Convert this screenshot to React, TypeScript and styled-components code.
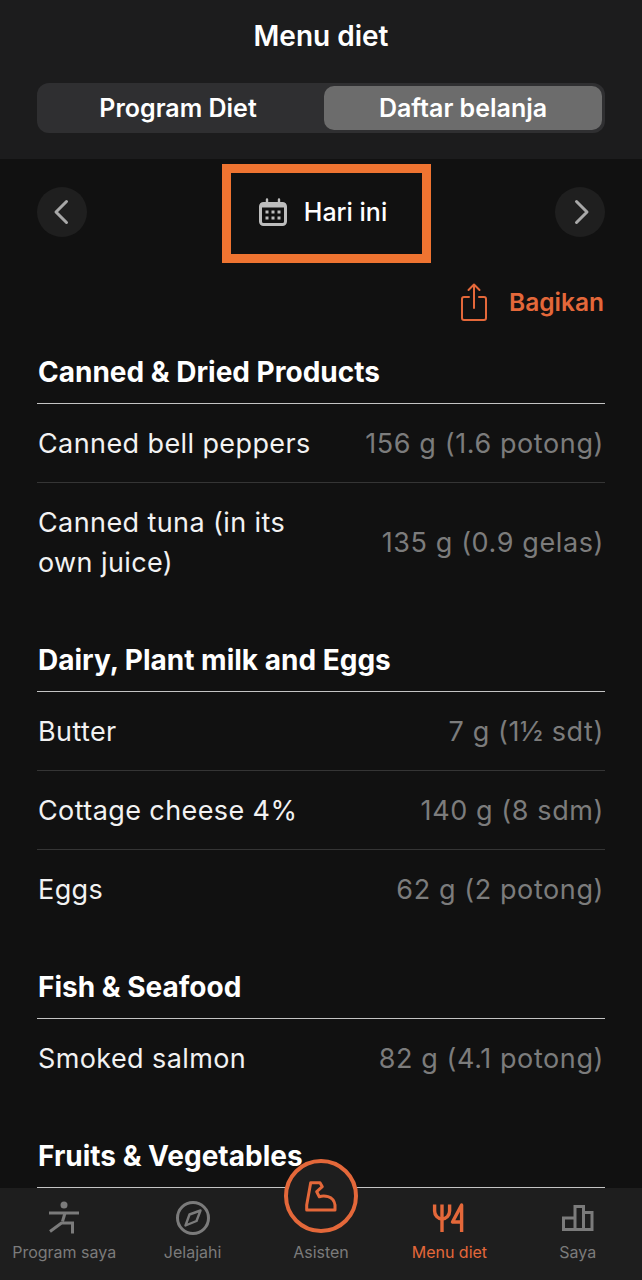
import styled, { createGlobalStyle } from "styled-components";

const GlobalStyle = createGlobalStyle`
  html, body {
    margin: 0;
    padding: 0;
    background: #111111;
  }
  * {
    box-sizing: border-box;
  }
`;

const Screen = styled.div`
  width: 642px;
  height: 1280px;
  display: flex;
  flex-direction: column;
  overflow: hidden;
  background: #111111;
  font-family: "Inter", "Liberation Sans", sans-serif;
  color: #f4f4f4;
`;

const Header = styled.header`
  height: 159px;
  flex: none;
  padding: 18px 37px 0;
  background: #1c1c1d;
`;

const Title = styled.h1`
  margin: 0 0 29px;
  height: 36px;
  font-size: 28px;
  line-height: 36px;
  font-weight: 600;
  text-align: center;
  color: #ffffff;
`;

const Segments = styled.div`
  display: grid;
  grid-template-columns: 276px 278px;
  gap: 8px;
  height: 50px;
  padding: 3px;
  border-radius: 12px;
  background: #2f2f31;
`;

const Segment = styled.div<{ $active?: boolean }>`
  display: flex;
  align-items: center;
  justify-content: center;
  border-radius: 10px;
  font-size: 25px;
  font-weight: 600;
  background: ${(p) => (p.$active ? "#6c6c6c" : "transparent")};
  color: #ffffff;
`;

const Content = styled.main`
  flex: 1;
  min-height: 0;
  overflow: hidden;
  padding: 0 37px;
`;

const DateRow = styled.div`
  position: relative;
  display: flex;
  align-items: center;
  justify-content: space-between;
  height: 50px;
  margin-top: 28px;
`;

const RoundButton = styled.button<{ $side: "left" | "right" }>`
  width: 50px;
  height: 50px;
  padding: ${(p) => (p.$side === "left" ? "0 3px 0 0" : "0 0 0 3px")};
  border: 0;
  border-radius: 50%;
  display: flex;
  align-items: center;
  justify-content: center;
  background: #1f1f1f;
`;

const Today = styled.div`
  display: flex;
  align-items: center;
  gap: 17px;
  margin-left: 4px;
  font-size: 25px;
  font-weight: 500;
  color: #ffffff;
`;

/* orange annotation drawn over the screenshot */
const Highlight = styled.div`
  position: absolute;
  left: 185px;
  top: -23px;
  width: 209px;
  height: 99px;
  border: 9.5px solid #ef7431;
`;

const ShareRow = styled.div`
  display: flex;
  align-items: center;
  justify-content: flex-end;
  gap: 22px;
  height: 38px;
  margin-top: 46px;
  padding-right: 1px;
  font-size: 24.5px;
  font-weight: 600;
  color: #e4683a;
`;

const Section = styled.section`
  margin-bottom: 42px;
  &:first-of-type {
    margin-top: 34px;
  }
`;

const SectionTitle = styled.h2`
  margin: 0;
  height: 49px;
  padding: 0 0 15px 1px;
  border-bottom: 1px solid #c4c4c4;
  font-size: 28px;
  line-height: 34px;
  font-weight: 700;
  color: #ffffff;
`;

const Row = styled.div`
  display: flex;
  align-items: center;
  justify-content: space-between;
  gap: 24px;
  padding: 20px 1px 18px;
  border-bottom: 1px solid #353535;
  font-size: 27px;
  line-height: 40px;
  &:last-child {
    border-bottom: 0;
  }
`;

const Name = styled.span`
  max-width: 290px;
  letter-spacing: 0.4px;
  color: #f2f2f2;
`;

const Amount = styled.span`
  white-space: nowrap;
  letter-spacing: 0.6px;
  color: #7c7c7c;
`;

const TabBar = styled.nav`
  position: relative;
  z-index: 1;
  flex: none;
  height: 92px;
  display: grid;
  grid-template-columns: repeat(5, 1fr);
  background: #1e1e1e;
`;

const Tab = styled.div<{ $active?: boolean }>`
  display: flex;
  flex-direction: column;
  align-items: center;
  padding-top: 12px;
  font-size: 16px;
  line-height: 20px;
  color: ${(p) => (p.$active ? "#e4683a" : "#7b7b7b")};
  svg {
    display: block;
    margin-bottom: 6px;
  }
`;

const IconSlot = styled.div`
  height: 36px;
  margin-bottom: 6px;
`;

const AssistantCircle = styled.div`
  position: absolute;
  left: 284px;
  top: -29px;
  width: 74px;
  height: 74px;
  border: 4px solid #e4683a;
  border-radius: 50%;
  display: flex;
  align-items: center;
  justify-content: center;
  background: #1e1e1e;
`;

const Chevron = ({ left }: { left?: boolean }) => (
  <svg width="16" height="26" viewBox="0 0 16 26" fill="none" stroke="#a8a8a8" strokeWidth="3" strokeLinecap="round" strokeLinejoin="round">
    <path d={left ? "M13.500 2.500 3 13l10.500 10.500" : "M2.500 2.500 13 13 2.500 23.500"} />
  </svg>
);

const CalendarIcon = () => (
  <svg width="28" height="28" viewBox="0 0 28 28" fill="none">
    <rect x="1.500" y="5.500" width="25" height="21" rx="3" stroke="#bdbdbd" strokeWidth="3" />
    <rect x="1.500" y="5.500" width="25" height="4" fill="#bdbdbd" />
    <path d="M8 1.500v6M20 1.500v6" stroke="#bdbdbd" strokeWidth="2.400" strokeLinecap="round" />
    <g fill="#bdbdbd">
      <rect x="6.500" y="12.500" width="3" height="3" />
      <rect x="12.500" y="12.500" width="3" height="3" />
      <rect x="18.500" y="12.500" width="3" height="3" />
      <rect x="6.500" y="18.500" width="3" height="3" />
      <rect x="12.500" y="18.500" width="3" height="3" />
      <rect x="18.500" y="18.500" width="3" height="3" />
    </g>
  </svg>
);

const ShareIcon = () => (
  <svg width="26" height="38" viewBox="0 0 26 38" fill="none" stroke="#e4683a" strokeWidth="2" strokeLinecap="round" strokeLinejoin="round">
    <path d="M8 14H3a2 2 0 0 0-2 2v19a2 2 0 0 0 2 2h20a2 2 0 0 0 2-2V16a2 2 0 0 0-2-2h-5" />
    <path d="M13 25V1.500M7.500 7 13 1.500 18.500 7" />
  </svg>
);

const YogaIcon = () => (
  <svg width="36" height="36" viewBox="0 0 36 36" fill="none" stroke="#7b7b7b" strokeWidth="3">
    <circle cx="18" cy="5" r="3.500" fill="#7b7b7b" stroke="none" />
    <path d="M3 13h30" />
    <path d="M19 13 16.500 21.500" />
    <path d="M4 31.500 15.500 23H26.500V33.500" />
  </svg>
);

const CompassIcon = () => (
  <svg width="36" height="36" viewBox="0 0 36 36" fill="none" stroke="#7b7b7b" strokeWidth="3">
    <circle cx="18" cy="18" r="15.500" />
    <path d="M25.500 10.500 21.500 21 10.500 25.500 14.500 14.500Z" strokeWidth="2.400" strokeLinejoin="round" />
  </svg>
);

const MuscleIcon = () => (
  <svg width="36" height="36" viewBox="0 0 36 36" fill="none" stroke="#e4683a" strokeWidth="3" strokeLinejoin="round">
    <path d="M7.700 4.700H17L19.300 8.700 13.700 13.700 16.300 18.700C20 17.500 30.500 17 32 27V32H3.700V27Z" />
  </svg>
);

const CutleryIcon = () => (
  <svg width="36" height="36" viewBox="0 0 36 36" fill="none" stroke="#e4683a" strokeWidth="3.400">
    <path d="M3.600 4.500V11a7.500 8 0 0 0 15 0V4.500" />
    <path d="M11 4.500V32" />
    <path d="M30.600 32V5L21.500 22H30.600" strokeLinejoin="round" />
  </svg>
);

const BarsIcon = () => (
  <svg width="36" height="36" viewBox="0 0 36 36" fill="none" stroke="#7b7b7b" strokeWidth="3">
    <path d="M3.500 29.500V18H15V29.500ZM15 29.500V6.500H23.500V29.500ZM23.500 29.500V12.500H32V29.500Z" />
  </svg>
);

const sections = [
  {
    title: "Canned & Dried Products",
    items: [
      ["Canned bell peppers", "156 g (1.6 potong)"],
      ["Canned tuna (in its own juice)", "135 g (0.9 gelas)"],
    ],
  },
  {
    title: "Dairy, Plant milk and Eggs",
    items: [
      ["Butter", "7 g (1½ sdt)"],
      ["Cottage cheese 4%", "140 g (8 sdm)"],
      ["Eggs", "62 g (2 potong)"],
    ],
  },
  {
    title: "Fish & Seafood",
    items: [["Smoked salmon", "82 g (4.1 potong)"]],
  },
  {
    title: "Fruits & Vegetables",
    items: [],
  },
];

export default function App() {
  return (
    <Screen>
      <GlobalStyle />
      <Header>
        <Title>Menu diet</Title>
        <Segments>
          <Segment>Program Diet</Segment>
          <Segment $active>Daftar belanja</Segment>
        </Segments>
      </Header>
      <Content>
        <DateRow>
          <RoundButton $side="left">
            <Chevron left />
          </RoundButton>
          <Today>
            <CalendarIcon />
            Hari ini
          </Today>
          <RoundButton $side="right">
            <Chevron />
          </RoundButton>
          <Highlight />
        </DateRow>
        <ShareRow>
          <ShareIcon />
          Bagikan
        </ShareRow>
        {sections.map((section) => (
          <Section key={section.title}>
            <SectionTitle>{section.title}</SectionTitle>
            {section.items.map(([name, amount]) => (
              <Row key={name}>
                <Name>{name}</Name>
                <Amount>{amount}</Amount>
              </Row>
            ))}
          </Section>
        ))}
      </Content>
      <TabBar>
        <Tab>
          <YogaIcon />
          Program saya
        </Tab>
        <Tab>
          <CompassIcon />
          Jelajahi
        </Tab>
        <Tab>
          <IconSlot />
          Asisten
        </Tab>
        <Tab $active>
          <CutleryIcon />
          Menu diet
        </Tab>
        <Tab>
          <BarsIcon />
          Saya
        </Tab>
        <AssistantCircle>
          <MuscleIcon />
        </AssistantCircle>
      </TabBar>
    </Screen>
  );
}
